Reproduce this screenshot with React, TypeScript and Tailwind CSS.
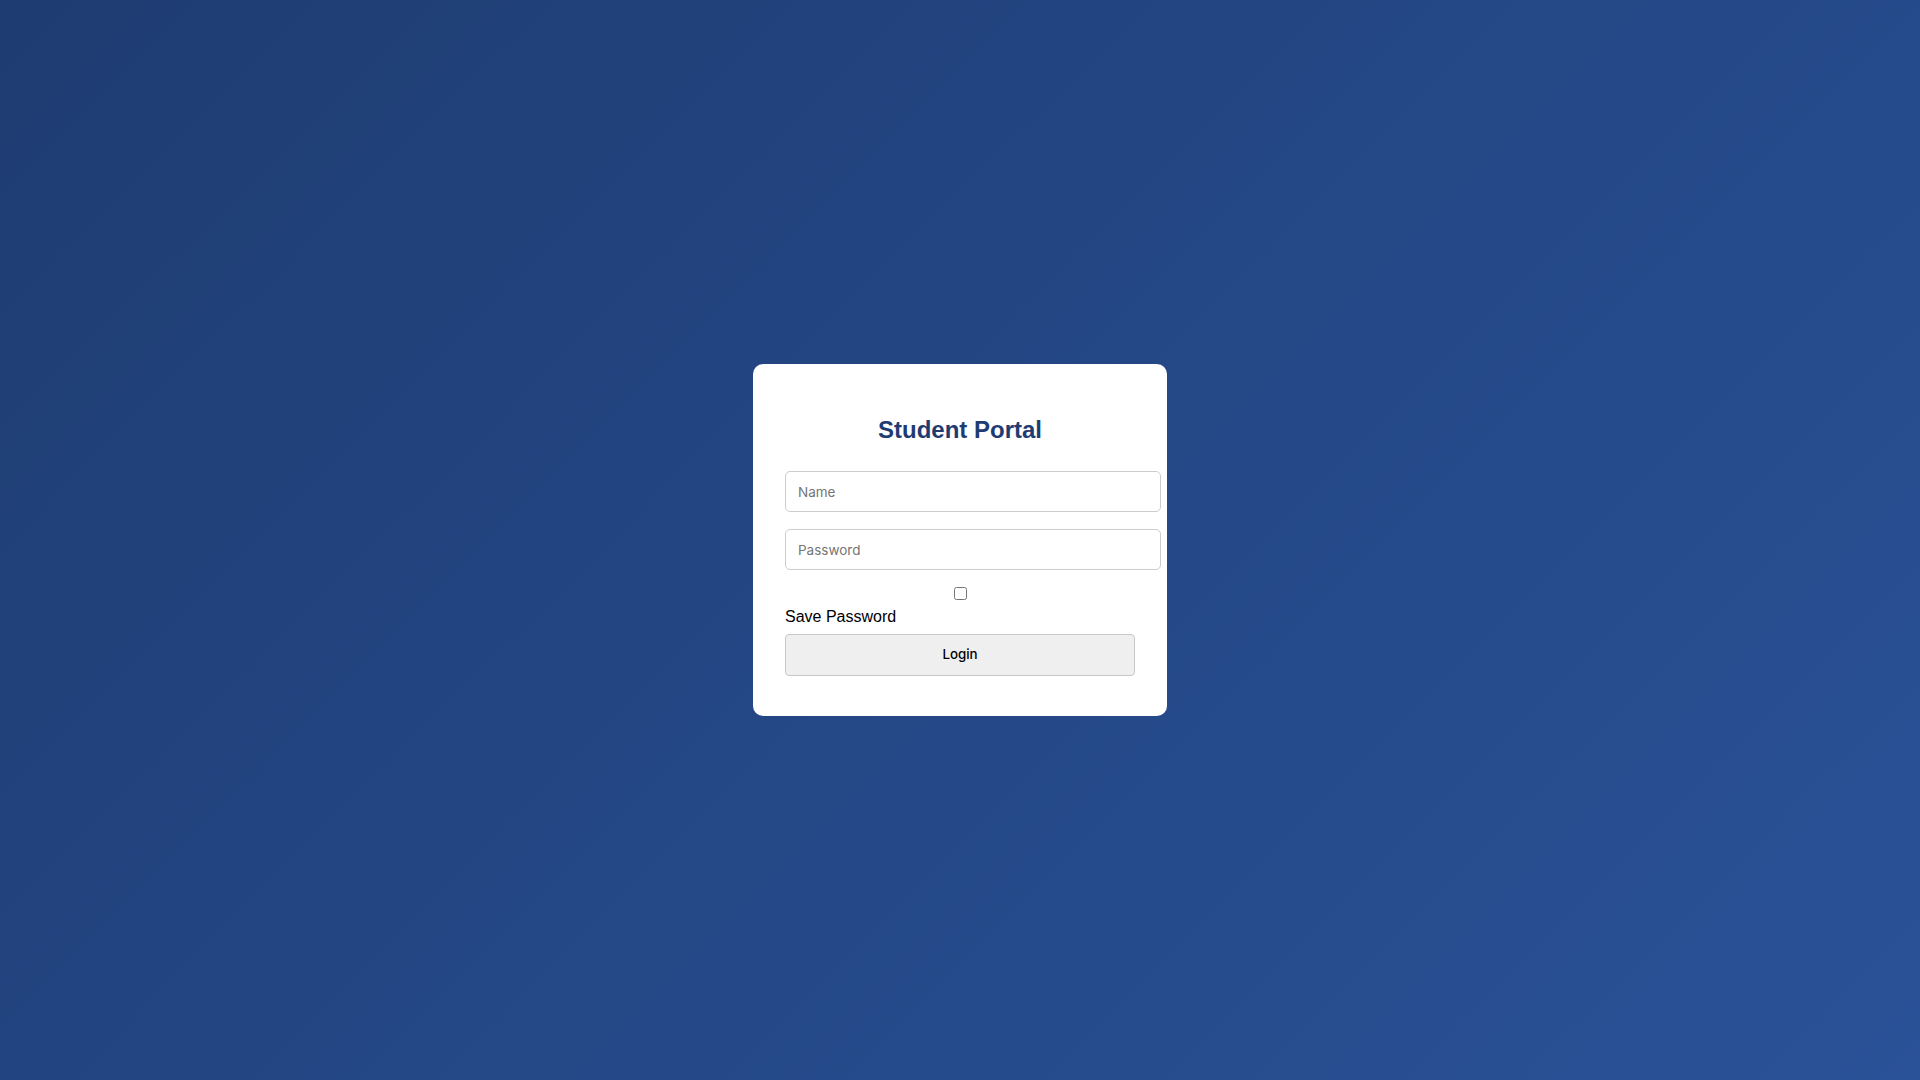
import React from "react";

export default function App() {
  return (
    <div className="w-full h-[1080px] flex items-center justify-center bg-[linear-gradient(135deg,#1e3c72,#2a5298)]">
      <div className="w-[414px] h-[352px] bg-white rounded-[10px] px-8 pt-8 flex flex-col">
        <h2 className="mt-[20px] text-center text-[24px] leading-[28px] font-bold text-[#1e3c72] font-['Liberation_Sans',Arial,sans-serif]">
          Student Portal
        </h2>
        <input
          type="text"
          placeholder="Name"
          className="mt-[27px] w-[376px] h-[41px] px-3 border border-[#cccccc] rounded-[5px] text-[13.5px] font-['Inter',sans-serif] placeholder:text-[#757575] outline-none"
        />
        <input
          type="password"
          placeholder="Password"
          className="mt-[17px] w-[376px] h-[41px] px-3 border border-[#cccccc] rounded-[5px] text-[13.5px] font-['Inter',sans-serif] placeholder:text-[#757575] outline-none"
        />
        <div className="mt-[17px] flex justify-center h-[13px]">
          <input type="checkbox" className="w-[13px] h-[13px] m-0" />
        </div>
        <label className="mt-[7px] text-[16px] leading-[19px] text-black font-['Liberation_Sans',Arial,sans-serif]">
          Save Password
        </label>
        <button className="mt-[8px] w-[350px] h-[42px] bg-[#efefef] border border-[#c8c8c8] rounded-[4px] text-[13.33px] text-black font-medium font-['Inter',sans-serif]">
          Login
        </button>
      </div>
    </div>
  );
}
